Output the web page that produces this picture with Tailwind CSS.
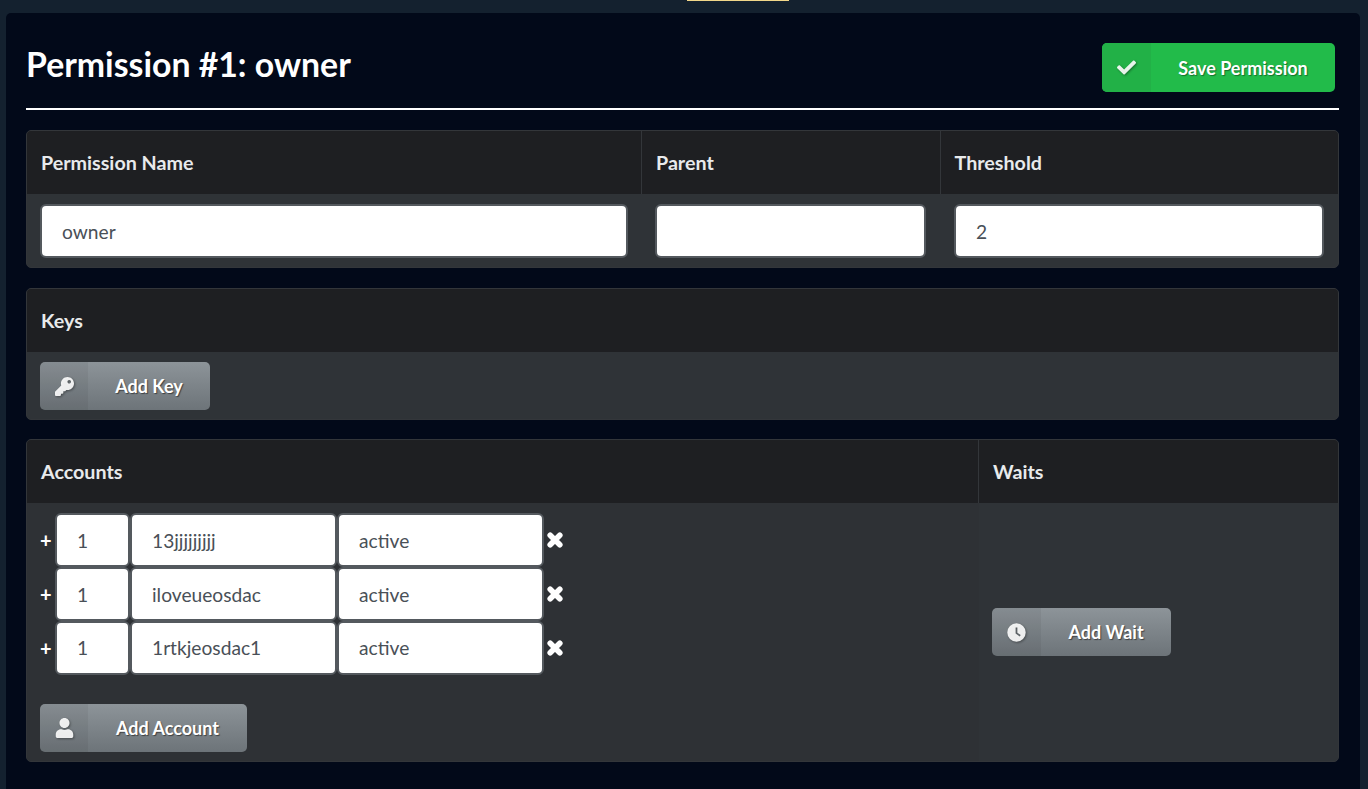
<!doctype html>
<html>
<head>
<meta charset="utf-8">
<script src="https://cdn.jsdelivr.net/npm/@tailwindcss/browser@4"></script>
</head>
<body class="h-[789px] overflow-hidden bg-[#14212f] font-['Lato',sans-serif]">
<div class="flex flex-col h-[789px] px-[6px] pr-[8px]">
  <div class="h-[13px] shrink-0 pl-[681px]"><div class="w-[102px] h-px bg-[#f2d78a]"></div></div>
  <main class="flex-1 bg-[#020919] rounded-t-[5px] pl-[20px] pr-[21px]">
    <header class="h-[97px] border-b-2 border-white flex items-start justify-between">
      <h1 class="mt-[27px] text-[33.8px] leading-[48px] font-bold text-white">Permission #1: owner</h1>
      <button class="mt-[30px] mr-[4px] h-[49px] w-[233px] flex rounded-[5px] overflow-hidden bg-[#22bb4a] text-white text-[18px] font-bold [text-shadow:1px_1px_1px_rgba(0,0,0,.4)]">
        <span class="w-[49px] h-full bg-[#22b147] flex items-center justify-center">
          <svg viewBox="0 0 512 512" class="w-[19px] h-[19px] fill-white/90 drop-shadow-[1px_1px_1px_rgba(0,0,0,.4)]"><path d="M173.898 439.404l-166.4-166.4c-9.997-9.997-9.997-26.206 0-36.204l36.203-36.204c9.997-9.998 26.207-9.998 36.204 0L192 312.69 432.095 72.596c9.997-9.997 26.207-9.997 36.204 0l36.203 36.204c9.997 9.997 9.997 26.206 0 36.204l-294.4 294.401c-9.998 9.997-26.207 9.997-36.204-.001z"/></svg>
        </span>
        <span class="flex-1 h-full flex items-center justify-center pt-px">Save Permission</span>
      </button>
    </header>

    <section class="mt-[20px] border border-[#33363a] rounded-[5px] overflow-hidden bg-[#2f3337]">
      <div class="flex h-[63px] bg-[#1e1f22] text-[#e8eaec] text-[19.7px] font-bold">
        <div class="w-[615px] border-r border-[#33363a] pl-[14px] flex items-center">Permission Name</div>
        <div class="w-[299px] border-r border-[#33363a] pl-[14px] flex items-center">Parent</div>
        <div class="flex-1 pl-[13.5px] flex items-center">Threshold</div>
      </div>
      <div class="flex h-[73px] items-center">
        <div class="w-[615px] pl-[13px]"><input value="owner" class="w-[588px] h-[54px] bg-white border-2 border-[#54595e] rounded-[6px] pl-[20px] pt-[2px] text-[19.2px] text-[#495057]"></div>
        <div class="w-[299px] pl-[13px]"><input value="" class="w-[271px] h-[54px] bg-white border-2 border-[#54595e] rounded-[6px] pl-[20px] pt-[2px] text-[19.2px] text-[#495057]"></div>
        <div class="flex-1 pl-[13px]"><input value="2" class="w-[370px] h-[54px] bg-white border-2 border-[#54595e] rounded-[6px] pl-[20px] pt-[2px] text-[19.2px] text-[#495057]"></div>
      </div>
    </section>

    <section class="mt-[20px] border border-[#33363a] rounded-[5px] overflow-hidden bg-[#2f3337]">
      <div class="h-[63px] bg-[#1e1f22] text-[#e8eaec] text-[19.7px] font-bold pl-[14px] flex items-center">Keys</div>
      <div class="h-[67px] pl-[13px] pt-[10px]">
        <button class="h-[48px] w-[170px] flex rounded-[5px] overflow-hidden bg-linear-to-b from-[#8d9499] to-[#6d7479] text-white text-[18px] font-bold [text-shadow:1px_1px_1px_rgba(0,0,0,.5)]">
          <span class="w-[48px] h-full bg-black/5 flex items-center justify-center">
            <svg viewBox="0 0 512 512" class="w-[19px] h-[19px] fill-white/90 drop-shadow-[1px_1px_1px_rgba(0,0,0,.4)]"><path d="M512 176.001C512 273.203 433.202 352 336 352c-11.22 0-22.19-1.062-32.827-3.069l-24.012 27.014A23.999 23.999 0 0 1 261.223 384H224v40c0 13.255-10.745 24-24 24h-40v40c0 13.255-10.745 24-24 24H24c-13.255 0-24-10.745-24-24v-78.059c0-6.365 2.529-12.47 7.029-16.971l161.802-161.802C163.108 213.814 160 195.271 160 176 160 78.798 238.797.001 335.999 0 433.488-.001 512 78.511 512 176.001zM336 128c0 26.51 21.49 48 48 48s48-21.49 48-48-21.49-48-48-48-48 21.49-48 48z"/></svg>
          </span>
          <span class="flex-1 h-full flex items-center justify-center pt-px">Add Key</span>
        </button>
      </div>
    </section>

    <section class="mt-[19px] border border-[#33363a] rounded-[5px] overflow-hidden bg-[#2f3337]">
      <div class="flex h-[63px] bg-[#1e1f22] text-[#e8eaec] text-[19.7px] font-bold">
        <div class="w-[952px] border-r border-[#33363a] pl-[14px] flex items-center">Accounts</div>
        <div class="flex-1 pl-[14px] flex items-center">Waits</div>
      </div>
      <div class="flex h-[258px]">
        <div class="w-[952px] bg-[#2e3135] pl-[13px] pt-[10px] flex flex-col">
          <div class="flex items-center h-[54px]">
            <span class="w-[15px] text-white text-[20px] font-bold">+</span>
            <input value="1" class="w-[75px] h-[54px] bg-white border-2 border-[#54595e] rounded-[6px] pl-[20px] text-[19.2px] text-[#495057]">
            <input value="13jjjjjjjjj" class="w-[207px] h-[54px] bg-white border-2 border-[#54595e] rounded-[6px] pl-[20px] text-[19.2px] text-[#495057]">
            <input value="active" class="w-[207px] h-[54px] bg-white border-2 border-[#54595e] rounded-[6px] pl-[20px] text-[19.2px] text-[#495057]">
            <svg viewBox="0 0 16 16" class="ml-[3px] w-[16px] h-[16px] stroke-white fill-none"><path stroke-width="5.6" stroke-linecap="round" d="M3.2 3.2l9.6 9.6M12.8 3.2l-9.6 9.6"/></svg>
          </div>
          <div class="flex items-center h-[54px]">
            <span class="w-[15px] text-white text-[20px] font-bold">+</span>
            <input value="1" class="w-[75px] h-[54px] bg-white border-2 border-[#54595e] rounded-[6px] pl-[20px] text-[19.2px] text-[#495057]">
            <input value="iloveueosdac" class="w-[207px] h-[54px] bg-white border-2 border-[#54595e] rounded-[6px] pl-[20px] text-[19.2px] text-[#495057]">
            <input value="active" class="w-[207px] h-[54px] bg-white border-2 border-[#54595e] rounded-[6px] pl-[20px] text-[19.2px] text-[#495057]">
            <svg viewBox="0 0 16 16" class="ml-[3px] w-[16px] h-[16px] stroke-white fill-none"><path stroke-width="5.6" stroke-linecap="round" d="M3.2 3.2l9.6 9.6M12.8 3.2l-9.6 9.6"/></svg>
          </div>
          <div class="flex items-center h-[54px]">
            <span class="w-[15px] text-white text-[20px] font-bold">+</span>
            <input value="1" class="w-[75px] h-[54px] bg-white border-2 border-[#54595e] rounded-[6px] pl-[20px] pb-[2px] text-[19.2px] text-[#495057]">
            <input value="1rtkjeosdac1" class="w-[207px] h-[54px] bg-white border-2 border-[#54595e] rounded-[6px] pl-[20px] pb-[2px] text-[19.2px] text-[#495057]">
            <input value="active" class="w-[207px] h-[54px] bg-white border-2 border-[#54595e] rounded-[6px] pl-[20px] pb-[2px] text-[19.2px] text-[#495057]">
            <svg viewBox="0 0 16 16" class="ml-[3px] w-[16px] h-[16px] stroke-white fill-none"><path stroke-width="5.6" stroke-linecap="round" d="M3.2 3.2l9.6 9.6M12.8 3.2l-9.6 9.6"/></svg>
          </div>
          <button class="mt-[29px] h-[48px] w-[207px] flex rounded-[5px] overflow-hidden bg-linear-to-b from-[#8d9499] to-[#6d7479] text-white text-[18px] font-bold [text-shadow:1px_1px_1px_rgba(0,0,0,.5)]">
            <span class="w-[48px] h-full bg-black/5 flex items-center justify-center">
              <svg viewBox="0 0 448 512" class="w-[19px] h-[20px] fill-white/90 drop-shadow-[1px_1px_1px_rgba(0,0,0,.4)]"><path d="M224 256c70.7 0 128-57.3 128-128S294.7 0 224 0 96 57.3 96 128s57.3 128 128 128zm89.6 32h-16.7c-22.2 10.2-46.9 16-72.9 16s-50.6-5.8-72.9-16h-16.7C60.2 288 0 348.2 0 422.4V464c0 26.5 21.5 48 48 48h352c26.5 0 48-21.5 48-48v-41.6c0-74.2-60.2-134.4-134.4-134.4z"/></svg>
            </span>
            <span class="flex-1 h-full flex items-center justify-center pt-px">Add Account</span>
          </button>
        </div>
        <div class="flex-1 pl-[13px] flex items-center">
          <button class="h-[48px] w-[179px] flex rounded-[5px] overflow-hidden bg-linear-to-b from-[#8d9499] to-[#6d7479] text-white text-[18px] font-bold [text-shadow:1px_1px_1px_rgba(0,0,0,.5)]">
            <span class="w-[49px] h-full bg-black/5 flex items-center justify-center">
              <svg viewBox="0 0 512 512" class="w-[19px] h-[19px] fill-white/90 drop-shadow-[1px_1px_1px_rgba(0,0,0,.4)]"><path fill-rule="evenodd" d="M256 8a248 248 0 1 0 0 496 248 248 0 0 0 0-496zM232 120h48v140l90 65-28 39-110-80z"/></svg>
            </span>
            <span class="flex-1 h-full flex items-center justify-center pt-px">Add Wait</span>
          </button>
        </div>
      </div>
    </section>
  </main>
</div>
</body>
</html>
